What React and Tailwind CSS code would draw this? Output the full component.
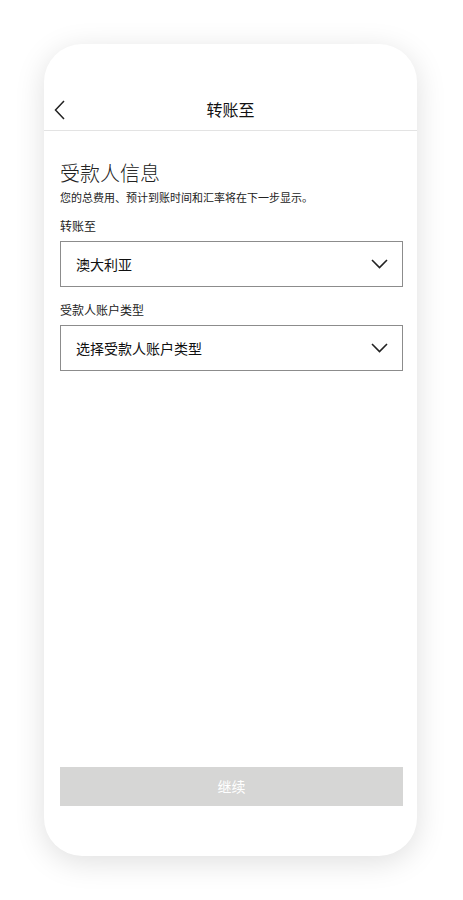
export default function App() {
  const font = { fontFamily: '"Noto Sans CJK SC", "Noto Sans", sans-serif' };
  const Chevron = () => (
    <svg width="17" height="10" viewBox="0 0 17 10" fill="none">
      <path d="M1 1l7.5 7.5L16 1" stroke="#222" strokeWidth="1.6" />
    </svg>
  );
  return (
    <div className="w-[463px] h-[900px] bg-white flex items-start pl-[44px] pt-[44px]" style={font}>
      <div className="w-[373px] h-[812px] bg-white rounded-[38px] shadow-[0_6px_30px_rgba(0,0,0,0.13)] flex flex-col overflow-hidden">
        <div className="h-[44px]" />
        <div className="h-[43px] flex items-center relative border-b border-[#e3e3e3]">
          <svg className="absolute left-[10px] top-[12px]" width="12" height="20" viewBox="0 0 12 20" fill="none">
            <path d="M10 1L1.5 10 10 19" stroke="#222" strokeWidth="1.5" />
          </svg>
          <div className="w-full text-center text-[16px] text-[#111]">转账至</div>
        </div>
        <div className="pl-4 pr-[14px] pt-[28px] flex flex-col flex-1">
          <div className="text-[20px] leading-[28px] text-[#222] font-light">受款人信息</div>
          <div className="text-[11px] leading-[16px] text-[#222] mt-[2px]">您的总费用、预计到账时间和汇率将在下一步显示。</div>
          <div className="text-[12px] leading-[16px] text-[#222] mt-[13px]">转账至</div>
          <div className="mt-[7px] h-[46px] border border-[#8c8c8c] flex items-center justify-between pl-[15px] pr-[14px]">
            <span className="text-[14px] text-[#111]">澳大利亚</span>
            <Chevron />
          </div>
          <div className="text-[12px] leading-[16px] text-[#222] mt-[15px]">受款人账户类型</div>
          <div className="mt-[7px] h-[46px] border border-[#8c8c8c] flex items-center justify-between pl-[15px] pr-[14px]">
            <span className="text-[14px] text-[#111]">选择受款人账户类型</span>
            <Chevron />
          </div>
          <div className="flex-1" />
          <div className="h-[39px] bg-[#d6d6d5] flex items-center justify-center text-[14px] text-white mb-[50px]">继续</div>
        </div>
      </div>
    </div>
  );
}
